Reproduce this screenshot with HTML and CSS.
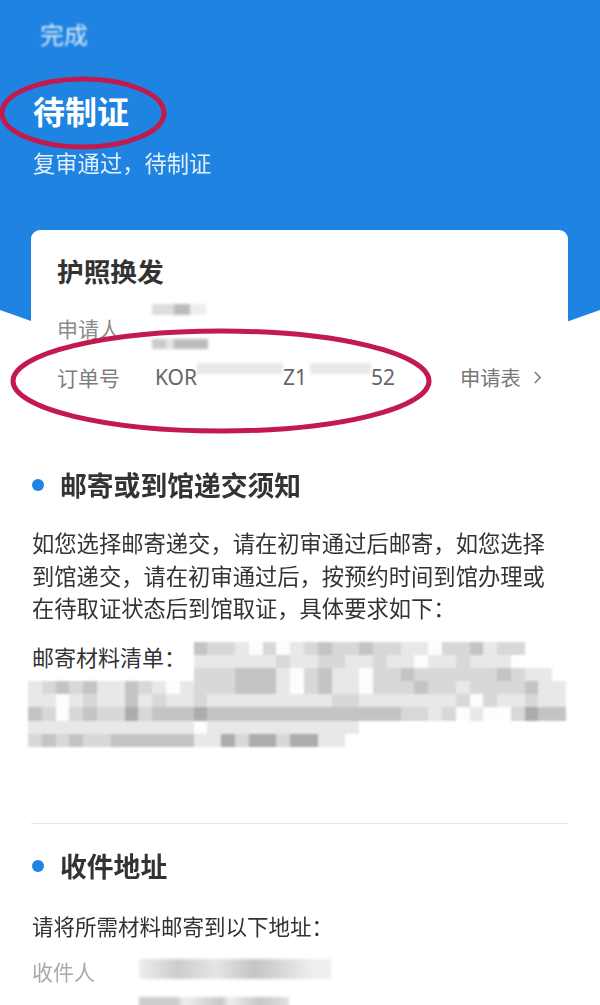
FILE: index.html
```html
<!DOCTYPE html>
<html lang="zh-CN">
<head>
<meta charset="utf-8">
<title>待制证</title>
<link rel="stylesheet" href="styles.css">
</head>
<body>
<div class="page">
  <header class="hero">
    <div class="done">完成</div>
    <h1 class="hero-title">待制证</h1>
    <p class="hero-sub">复审通过&#65292;待制证</p>
  </header>
  <section class="card">
    <h2 class="card-title">护照换发</h2>
    <div class="row applicant">
      <span class="label">申请人</span>
      <span class="name-mask"><i class="mask-a"></i><i class="mask-b"></i></span>
    </div>
    <div class="row order">
      <span class="label">订单号</span>
      <span class="order-no">
        <span>KOR</span><i class="mask-long"></i><span>Z1</span><i class="mask-short"></i><span>52</span>
      </span>
      <span class="form-link">申请表
        <svg class="chev" viewBox="0 0 10 16" aria-hidden="true"><path d="M2 2l6 6-6 6"/></svg>
      </span>
    </div>
  </section>
  <section class="block first">
    <h2 class="section-title">邮寄或到馆递交须知</h2>
    <p class="body-text">如您选择邮寄递交&#65292;请在初审通过后邮寄&#65292;如您选择到馆递交&#65292;请在初审通过后&#65292;按预约时间到馆办理或在待取证状态后到馆取证&#65292;具体要求如下&#65306;</p>
    <div class="list-wrap">
      <span class="list-label">邮寄材料清单&#65306;</span>
      <div class="mosaic" id="mosaic"></div>
    </div>
  </section>
  <hr class="divider">
  <section class="block">
    <h2 class="section-title">收件地址</h2>
    <p class="address-intro">请将所需材料邮寄到以下地址&#65306;</p>
    <div class="row recipient">
      <span class="label">收件人</span>
      <span class="recipient-mask"><i class="rm-a"></i><i class="rm-b"></i></span>
    </div>
  </section>
  <svg class="ring ring-title" viewBox="0 0 170 76" aria-hidden="true"><ellipse cx="84" cy="38" rx="81" ry="34"/></svg>
  <svg class="ring ring-order" viewBox="0 0 424 108" aria-hidden="true"><ellipse cx="212" cy="54" rx="208" ry="50"/></svg>
</div>
<script src="mosaic.js"></script>
</body>
</html>
```
FILE: styles.css
```css
* { box-sizing: border-box; }
html, body { margin: 0; padding: 0; background: #fff; }
body { font-family: "Noto Sans CJK SC", "Noto Sans", sans-serif; color: #333; }
.page { position: relative; width: 600px; height: 1005px; overflow: hidden; filter: blur(.35px); }

.hero {
  height: 322px;
  padding: 17px 33px 0;
  background: #1e83e1;
  color: #fff;
  clip-path: polygon(0 0, 100% 0, 100% 310px, 569px 321px, 31px 321px, 0 310px);
}
.done { margin-left: 7px; font-size: 24px; line-height: 34px; opacity: .85; filter: blur(1px); }
.hero-title { margin: 21px 0 0; font-size: 32px; line-height: 76px; height: 76px; font-weight: 700; }
.hero-sub { margin: -2px 0 0; font-size: 22.3px; line-height: 32px; opacity: .88; }

.card {
  position: relative;
  margin: -92px 32px 0 31px;
  height: 187px;
  padding: 22px 26px 0;
  background: #fff;
  border-radius: 9px 9px 0 0;
}
.card-title { margin: 0; font-size: 26.7px; line-height: 38px; font-weight: 700; color: #333; }
.row { display: flex; align-items: center; }
.label { font-size: 21px; line-height: 30px; color: #8b8b8b; flex: none; width: 97px; }
.applicant { margin-top: 23px; height: 30px; position: relative; }
.name-mask { position: absolute; left: 95px; top: -9px; display: flex; flex-direction: column; gap: 24px; }
.name-mask i, .order-no i, .recipient-mask i { display: block; filter: blur(1.5px); }
.mask-a { width: 54px; height: 11px; background: linear-gradient(90deg, #ddd 0 40%, #bbb 40% 70%, #eee 70%); }
.mask-b { width: 56px; height: 10px; background: linear-gradient(90deg, #ccc 0 25%, #e2e2e2 25% 40%, #bcbcbc 40%); }
.order { margin-top: 14px; height: 40px; }
.order .label { width: 98px; color: #7d7d7d; }
.order-no { display: flex; align-items: center; font-family: "Noto Sans", sans-serif; font-size: 21px; color: #666; flex: none; width: 305px; }
.order-no i { align-self: flex-start; background: #e8e8e8; height: 11px; }
.mask-long { width: 86px; }
.mask-short { width: 61px; margin-left: 3px; }
.form-link { display: flex; align-items: center; gap: 12px; font-size: 20.3px; color: #777; white-space: nowrap; }
.chev { width: 9px; height: 15px; fill: none; stroke: #777; stroke-width: 1.6; }

.block { padding: 0 32px; }
.block.first { margin-top: 49px; position: relative; }
.section-title { position: relative; margin: 0; padding-left: 28px; font-size: 26.8px; line-height: 38px; font-weight: 700; color: #333; }
.section-title::before {
  content: ""; position: absolute; left: 0; top: 13px; width: 12px; height: 12px; border-radius: 50%; background: #1e83e1;
}
.body-text { margin: 22px 0 0; max-width: 520px; font-size: 22.3px; line-height: 32.5px; color: #333; }
.list-wrap { position: relative; height: 183px; margin-top: 16px; }
.list-label { position: relative; z-index: 1; font-size: 22px; line-height: 32px; color: #333; display: block; background: #fff; width: 156px; }
.mosaic { position: absolute; left: -4px; top: 2px; width: 540px; display: grid; grid-template-columns: repeat(39, 13.8px); grid-auto-rows: 13.2px; filter: blur(.8px); }
.mosaic span { display: block; }
.s0 { background: #fdfdfd; }
.s1 { background: #e8e8e8; }
.s2 { background: #d8d8d8; }
.s3 { background: #c4c4c4; }
.s4 { background: #acacac; }
.mosaic .e { background: transparent; }

.divider { margin: 0 32px 0 31px; border: 0; border-top: 1px solid #e6e6e6; }
.divider + .block { padding-top: 23px; }
.address-intro { margin: 25px 0 0; font-size: 21.5px; line-height: 32px; color: #333; }
.recipient { margin-top: 14px; position: relative; }
.recipient .label { color: #aaa; }
.recipient-mask { position: absolute; left: 107px; top: 3px; display: flex; flex-direction: column; gap: 18px; }
.rm-a { width: 192px; height: 20px; background: linear-gradient(90deg, #eee, #ccc 20%, #e5e5e5 40%, #c4c4c4 60%, #eee 90%); }
.rm-b { width: 150px; height: 18px; background: linear-gradient(90deg, #ccc 25%, #eee 30%, #c8c8c8 55%, #eee 60%, #c8c8c8 80%, #e0e0e0); }

.ring { position: absolute; fill: none; stroke: #c21a4d; stroke-width: 5; }
.ring-title { left: -1px; top: 75px; width: 170px; height: 76px; }
.ring-order { left: 9px; top: 327px; width: 424px; height: 108px; }
```
FILE: mosaic.js
```js
var rows = [
  "............322102012322322110223122",
  "............11111121122112110112111",
  "............22233310231102232222223211",
  "123231132101222333102311022232212222311",
  "110121131211211111111122111111120211211",
  "320232242333433333333333333221201002433",
  "111111111111011111111111",
  "23232233333311424424411"
];
var box = document.getElementById("mosaic");
rows.forEach(function (row) {
  for (var i = 0; i < 39; i++) {
    var c = row.charAt(i);
    var cell = document.createElement("span");
    cell.className = c === "." || c === "" ? "e" : "s" + c;
    box.appendChild(cell);
  }
});
```
